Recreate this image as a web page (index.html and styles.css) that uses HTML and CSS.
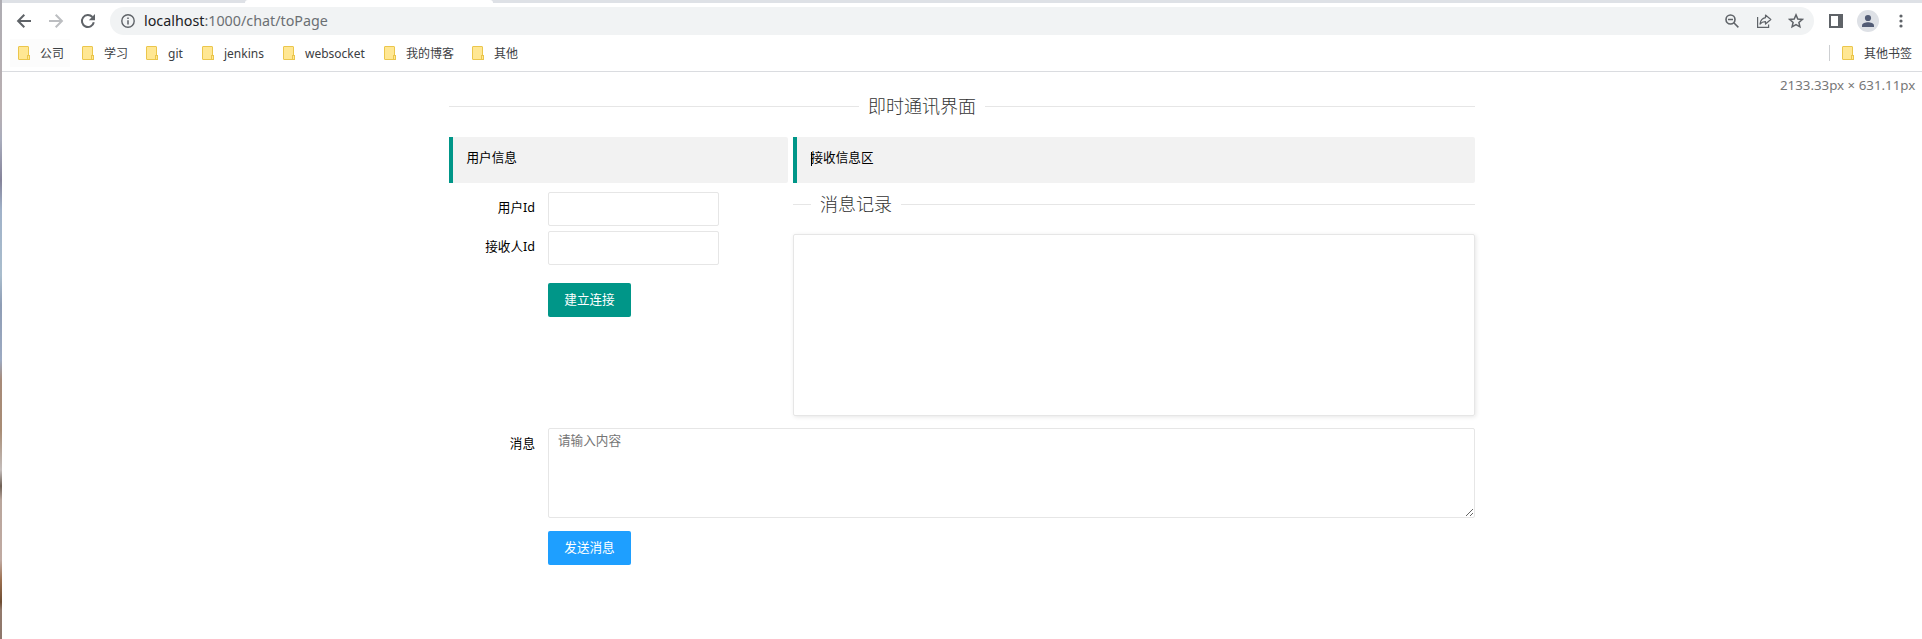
FILE: index.html
```html
<!DOCTYPE html>
<html lang="zh-CN">
<head>
<meta charset="utf-8">
<title>即时通讯界面</title>
<link rel="stylesheet" href="styles.css">
</head>
<body>
<div class="edge"></div>
<div class="window">
  <div class="tabs"><div class="tab"></div></div>
  <div class="toolbar">
    <svg class="nav" viewBox="0 0 16 16"><path d="M15 8H2.5M8.3 1.8L2.1 8l6.2 6.2" fill="none" stroke="#5f6368" stroke-width="2"/></svg>
    <svg class="nav" viewBox="0 0 16 16"><path d="M1 8h12.5M7.7 1.8L13.9 8l-6.2 6.2" fill="none" stroke="#bcbec1" stroke-width="2"/></svg>
    <svg class="nav" viewBox="0 0 16 16"><path d="M13.8 9.2A6 6 0 1 1 12.4 4" fill="none" stroke="#5f6368" stroke-width="2"/><path d="M15 1v6.2H8.8z" fill="#5f6368"/></svg>
    <div class="omnibox">
      <svg class="info" viewBox="0 0 14 14"><circle cx="7" cy="7" r="6.2" fill="none" stroke="#5f6368" stroke-width="1.4"/><path d="M7 6.2v4.3M7 3.4v1.5" stroke="#5f6368" stroke-width="1.5"/></svg>
      <span class="url"><b>localhost</b>:1000/chat/toPage</span>
      <svg class="act" viewBox="0 0 16 16"><circle cx="6.5" cy="6.5" r="4.5" fill="none" stroke="#5f6368" stroke-width="1.6"/><path d="M4 6.5h5M9.8 9.8l4.6 4.6" stroke="#5f6368" stroke-width="1.5"/></svg>
      <svg class="act" viewBox="0 0 16 16"><path d="M1.6 4v10.4h11v-3" fill="none" stroke="#5f6368" stroke-width="1.2"/><path d="M9.5 2l5.3 4.5-5.3 4.5V8.6C7 8.5 5.3 9.4 4 11c.4-3.2 2.2-5.7 5.5-6.3z" fill="none" stroke="#5f6368" stroke-width="1.2" stroke-linejoin="round"/></svg>
      <svg class="act" viewBox="0 0 16 16"><path d="M8 1.9l1.8 4.1 4.5.4-3.4 3 1 4.4L8 11.5l-3.9 2.3 1-4.4-3.4-3 4.5-.4z" fill="none" stroke="#5f6368" stroke-width="1.5"/></svg>
    </div>
    <svg class="panel" viewBox="0 0 14 14"><path d="M1 1h12v12H1z" fill="none" stroke="#5f6368" stroke-width="2"/><path d="M9 1h4v12H9z" fill="#5f6368"/></svg>
    <svg class="avatar" viewBox="0 0 22 22"><circle cx="11" cy="11" r="11" fill="#dee1e6"/><circle cx="11" cy="8" r="3.1" fill="#525c75"/><path d="M5 17v-1.6c0-2 3.500-3.200 6-3.200s6 1.200 6 3.200V17z" fill="#525c75"/></svg>
    <svg class="dots" viewBox="0 0 4 14"><g fill="#5f6368"><circle cx="2" cy="2" r="1.600"/><circle cx="2" cy="7" r="1.600"/><circle cx="2" cy="12" r="1.600"/></g></svg>
  </div>
  <div class="bookmarks">
    <span class="mark hover"><i class="folder"></i>公司</span>
    <span class="mark"><i class="folder"></i>学习</span>
    <span class="mark git"><i class="folder"></i>git</span>
    <span class="mark jenkins"><i class="folder"></i>jenkins</span>
    <span class="mark websocket"><i class="folder"></i>websocket</span>
    <span class="mark blog"><i class="folder"></i>我的博客</span>
    <span class="mark"><i class="folder"></i>其他</span>
    <span class="mark other"><i class="folder"></i>其他书签</span>
  </div>
  <main class="page">
    <div class="size">2133.33px × 631.11px</div>
    <h1 class="title main-title">即时通讯界面</h1>
    <div class="columns">
      <section class="user">
        <div class="quote">用户信息</div>
        <div class="row"><label>用户Id</label><input class="field"></div>
        <div class="row"><label>接收人Id</label><input class="field"></div>
        <button class="btn connect">建立连接</button>
      </section>
      <section class="receive">
        <div class="quote"><i class="caret"></i>接收信息区</div>
        <h2 class="title record-title">消息记录</h2>
        <div class="record"></div>
      </section>
    </div>
    <div class="row message"><label>消息</label><textarea class="field" placeholder="请输入内容"></textarea></div>
    <button class="btn send">发送消息</button>
  </main>
</div>
</body>
</html>
```
FILE: styles.css
```css
*, *::before, *::after { box-sizing: border-box; }
body {
  margin: 0;
  width: 1922px;
  height: 639px;
  display: flex;
  overflow: hidden;
  background: #fff;
  color: #000;
  font: 12.6px "Noto Sans", "Noto Sans CJK SC", sans-serif;
}
svg { display: block; flex: none; }
.edge {
  width: 2px;
  background: linear-gradient(#aeadb3 0, #b9afb1 110px, #a9adbd 140px, #85839a 180px, #a0b2c9 210px, #a9bdcd 275px, #8e9db5 305px, #9caac2 360px, #a78a78 380px, #a88c74 430px, #c4bdbb 470px, #6f6055 486px, #b9a69c 500px, #c0aaa2 560px, #9c7050 580px, #6e4d32 602px, #937a6c 610px, #8d766b 639px);
}
.window { flex: 1; min-width: 0; }
.tabs { height: 3px; background: #dee1e6; padding-left: 243px; }
.tab { width: 248px; height: 3px; background: #fff; border-radius: 3px 3px 0 0; }
.toolbar { height: 36px; display: flex; align-items: center; padding-left: 14px; }
.nav { width: 16px; height: 16px; margin-right: 16px; }
.omnibox {
  width: 1704px;
  height: 28px;
  margin-left: -2px;
  border-radius: 14px;
  background: #f1f3f4;
  display: flex;
  align-items: center;
  padding: 0 10px 0 11px;
}
.info { width: 14px; height: 14px; }
.url { margin: 0 auto 0 9px; font-size: 14.3px; line-height: 26px; color: #6b6f73; }
.url b { font-weight: 400; color: #202124; }
.act { width: 16px; height: 16px; margin-left: 16px; }
.panel { width: 14px; height: 14px; margin-left: 15px; }
.avatar { width: 22px; height: 22px; margin-left: 14px; }
.dots { width: 4px; height: 14px; margin-left: 20px; }
.bookmarks {
  height: 33px;
  padding: 0 10px 4px 8px;
  display: flex;
  align-items: center;
  border-bottom: 1px solid #dadce0;
  font-size: 12px;
  color: #3c4043;
}
.mark { width: 64px; height: 28px; padding-left: 8px; display: flex; align-items: center; white-space: nowrap; }
.hover { background: linear-gradient(#fcfcfc, #fcfcfc) 0 0 / 60px 28px no-repeat; }
.git { width: 56px; }
.jenkins { width: 81px; }
.websocket { width: 101px; }
.blog { width: 88px; }
.other { width: 83px; height: 16px; margin-left: auto; border-left: 1px solid #cdcfd2; padding-left: 12px; }
.folder {
  width: 11px;
  height: 14px;
  margin-right: 11px;
  flex: none;
  background: #ffe793;
  border: 1px solid #ebc64c;
  border-radius: 1px;
  position: relative;
}
.folder::after {
  content: "";
  position: absolute;
  right: -2px;
  bottom: -1px;
  width: 3px;
  height: 5px;
  border: 1px solid #ebc64c;
  background: #ffe793;
}
.page { width: 1026px; margin-left: 447px; padding-top: 21px; position: relative; }
.size { position: absolute; left: 1331px; top: 4px; font-size: 13.3px; line-height: 18px; color: #777; white-space: nowrap; }
.title {
  margin: 0;
  height: 27px;
  display: flex;
  align-items: center;
  gap: 9px;
  font-size: 18px;
  font-weight: 300;
  line-height: 27px;
  color: #333;
}
.title::before, .title::after { content: ""; height: 1px; flex: 1; background: #e6e6e6; }
.main-title { margin-bottom: 17px; }
.main-title::before { flex: 0 0 410px; }
.columns { display: flex; gap: 5px; height: 291px; }
.user { width: 339px; }
.receive { width: 682px; }
.quote {
  height: 46px;
  padding-left: 13.5px;
  border-left: 4px solid #009688;
  border-radius: 0 2px 2px 0;
  background: #f2f2f2;
  line-height: 42px;
  position: relative;
}
.caret { position: absolute; left: 14px; top: 15px; width: 1px; height: 14px; background: #000; }
.row { display: flex; margin-top: 5px; }
.quote + .row { margin-top: 9px; }
.row label { width: 99px; padding-right: 13px; text-align: right; line-height: 32px; white-space: nowrap; }
.field { width: 171px; height: 34px; border: 1px solid #e6e6e6; border-radius: 2px; background: #fff; padding: 0 9px; font: inherit; }
.btn { display: block; width: 83px; height: 34px; margin: 18px 0 0 99px; padding: 0 0 3px; border: 0; border-radius: 2px; color: #fff; font: inherit; background: #009688; }
.record-title { margin-top: 8px; }
.record-title::before { flex: 0 0 18px; }
.record { height: 182px; margin-top: 16px; border: 1px solid #e6e6e6; border-radius: 2px; box-shadow: 1px 1px 4px rgba(0, 0, 0, .1); }
.message { margin-top: 0; }
textarea.field { width: 927px; height: 90px; padding: 3px 9px; line-height: 18px; resize: vertical; }
textarea::placeholder { color: #757575; }
.send { margin-top: 13px; background: #1e9fff; }
```
